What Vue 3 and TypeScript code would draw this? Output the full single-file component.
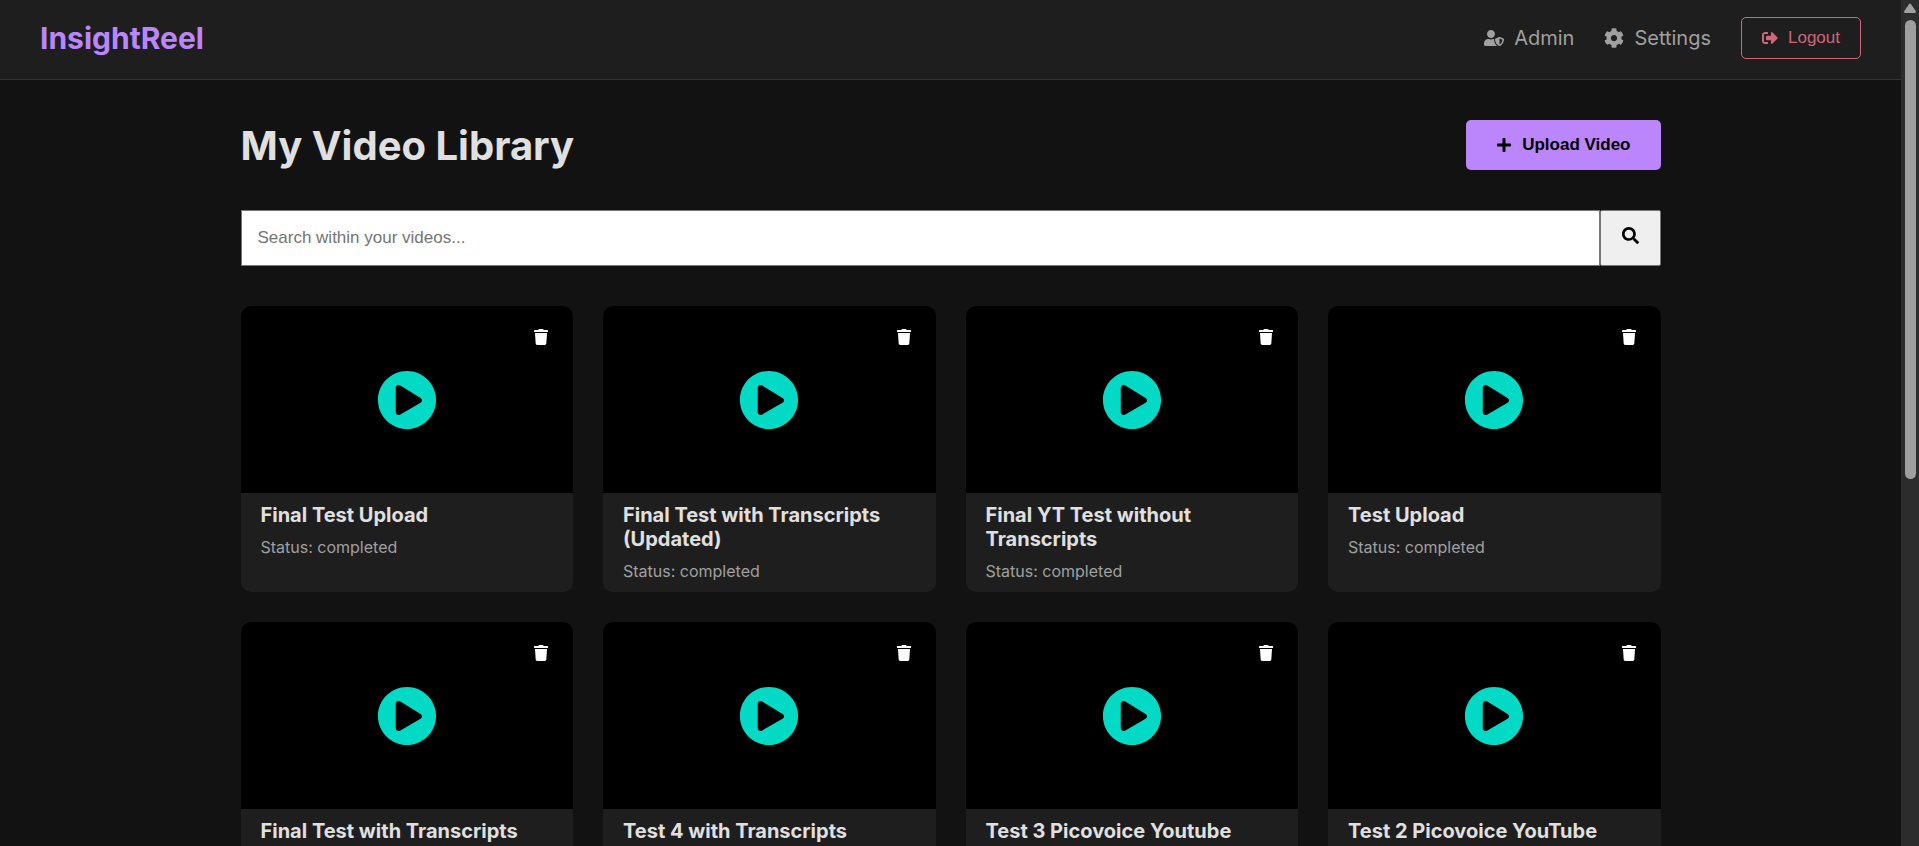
<script setup lang="ts">
import { ref } from 'vue'

interface Video {
  id: number
  title: string
  status: string
}

const query = ref<string>('')

const videos = ref<Video[]>([
  { id: 1, title: 'Final Test Upload', status: 'completed' },
  { id: 2, title: 'Final Test with Transcripts (Updated)', status: 'completed' },
  { id: 3, title: 'Final YT Test without Transcripts', status: 'completed' },
  { id: 4, title: 'Test Upload', status: 'completed' },
  { id: 5, title: 'Final Test with Transcripts', status: 'completed' },
  { id: 6, title: 'Test 4 with Transcripts', status: 'completed' },
  { id: 7, title: 'Test 3 Picovoice Youtube', status: 'completed' },
  { id: 8, title: 'Test 2 Picovoice YouTube', status: 'completed' },
])

function removeVideo(id: number): void {
  videos.value = videos.value.filter((video) => video.id !== id)
}
</script>

<template>
  <div class="shell">
    <div class="page">
      <header class="navbar">
        <a class="brand" href="#">InsightReel</a>
        <nav class="nav">
          <a class="nav-link" href="#admin">
            <svg class="icon" viewBox="0 0 640 512" aria-hidden="true">
              <path d="M622.3 271.1l-115.2-45c-4.1-1.6-12.6-3.7-22.2 0l-115.2 45c-10.7 4.2-17.7 14-17.7 24.9 0 111.6 68.7 188.8 132.9 213.9 9.6 3.7 18 1.6 22.2 0C558.4 489.9 640 420.5 640 296c0-10.9-7-20.7-17.7-24.9zM496 462.4V273.3l95.5 37.3c-5.6 87.1-60.9 135.4-95.5 151.8zM224 256c70.7 0 128-57.3 128-128S294.7 0 224 0 96 57.3 96 128s57.3 128 128 128zm96 40c0-2.5.8-4.8 1.1-7.2-2.5-.1-4.9-.8-7.5-.8h-16.7c-22.2 10.2-46.9 16-72.9 16s-50.6-5.8-72.9-16h-16.7C60.2 288 0 348.2 0 422.4V464c0 26.5 21.5 48 48 48h352c6.8 0 13.3-1.5 19.2-4-54-42.9-99.2-116.7-99.2-212z" />
            </svg>
            <span>Admin</span>
          </a>
          <a class="nav-link" href="#settings">
            <svg class="icon" viewBox="0 0 512 512" aria-hidden="true">
              <path d="M487.4 315.7l-42.6-24.6c4.3-23.2 4.3-47 0-70.2l42.6-24.6c4.9-2.8 7.1-8.6 5.5-14-11.1-35.6-30-67.8-54.7-94.6-3.8-4.1-10-5.1-14.8-2.3L380.8 110c-17.9-15.4-38.5-27.3-60.8-35.1V25.8c0-5.6-3.9-10.5-9.4-11.7-36.7-8.2-74.3-7.8-109.2 0-5.5 1.2-9.4 6.1-9.4 11.7V75c-22.2 7.9-42.8 19.8-60.8 35.1L88.7 85.5c-4.9-2.8-11-1.9-14.8 2.3-24.7 26.7-43.6 58.9-54.7 94.6-1.7 5.4.6 11.2 5.5 14L67.3 221c-4.3 23.2-4.3 47 0 70.2l-42.6 24.6c-4.9 2.8-7.1 8.6-5.5 14 11.1 35.6 30 67.8 54.7 94.6 3.8 4.1 10 5.1 14.8 2.3l42.6-24.6c17.9 15.4 38.5 27.3 60.8 35.1v49.2c0 5.6 3.9 10.5 9.4 11.7 36.7 8.2 74.3 7.8 109.2 0 5.5-1.2 9.4-6.1 9.4-11.7v-49.2c22.2-7.9 42.8-19.8 60.8-35.1l42.6 24.6c4.9 2.8 11 1.9 14.8-2.3 24.7-26.7 43.6-58.9 54.7-94.6 1.5-5.5-.7-11.3-5.6-14.1zM256 336c-44.1 0-80-35.9-80-80s35.9-80 80-80 80 35.9 80 80-35.9 80-80 80z" />
            </svg>
            <span>Settings</span>
          </a>
          <button class="logout" type="button">
            <svg class="icon" viewBox="0 0 512 512" aria-hidden="true">
              <path d="M497 273L329 441c-15 15-41 4.5-41-17v-96H152c-13.3 0-24-10.7-24-24v-96c0-13.3 10.7-24 24-24h136V88c0-21.4 25.9-32 41-17l168 168c9.3 9.4 9.3 24.6 0 34zM192 436v-40c0-6.6-5.4-12-12-12H96c-17.7 0-32-14.3-32-32V160c0-17.7 14.3-32 32-32h84c6.6 0 12-5.4 12-12V76c0-6.6-5.4-12-12-12H96c-53 0-96 43-96 96v192c0 53 43 96 96 96h84c6.6 0 12-5.4 12-12z" />
            </svg>
            <span>Logout</span>
          </button>
        </nav>
      </header>

      <main class="library">
        <div class="library-head">
          <h1>My Video Library</h1>
          <button class="upload" type="button">
            <svg class="icon" viewBox="0 0 448 512" aria-hidden="true">
              <path d="M416 208H272V64c0-17.67-14.33-32-32-32h-32c-17.67 0-32 14.33-32 32v144H32c-17.67 0-32 14.33-32 32v32c0 17.67 14.33 32 32 32h144v144c0 17.67 14.33 32 32 32h32c17.67 0 32-14.33 32-32V304h144c17.67 0 32-14.33 32-32v-32c0-17.67-14.33-32-32-32z" />
            </svg>
            <span>Upload Video</span>
          </button>
        </div>

        <form class="search" role="search" @submit.prevent>
          <input
            v-model="query"
            class="search-input"
            type="text"
            aria-label="Search within your videos"
            placeholder="Search within your videos..."
          />
          <button class="search-button" type="submit" aria-label="Search">
            <svg class="icon" viewBox="0 0 512 512" aria-hidden="true">
              <path d="M505 442.7L405.3 343c-4.5-4.5-10.6-7-17-7H372c27.6-35.3 44-79.7 44-128C416 93.1 322.9 0 208 0S0 93.1 0 208s93.1 208 208 208c48.3 0 92.7-16.4 128-44v16.3c0 6.4 2.5 12.5 7 17l99.7 99.7c9.4 9.4 24.6 9.4 33.9 0l28.3-28.3c9.4-9.4 9.4-24.6.1-34zM208 336c-70.7 0-128-57.2-128-128 0-70.7 57.2-128 128-128 70.7 0 128 57.2 128 128 0 70.7-57.2 128-128 128z" />
            </svg>
          </button>
        </form>

        <section class="grid" aria-label="Videos">
          <article v-for="video in videos" :key="video.id" class="card">
            <div class="thumb">
              <svg class="play" viewBox="0 0 512 512" aria-hidden="true">
                <path d="M256 8C119 8 8 119 8 256s111 248 248 248 248-111 248-248S393 8 256 8zm115.7 272l-176 101c-15.8 8.8-35.7-2.5-35.7-21V152c0-18.4 19.8-29.8 35.7-21l176 107c16.4 9.2 16.4 32.9 0 42z" />
              </svg>
              <button
                class="delete"
                type="button"
                :aria-label="`Delete ${video.title}`"
                @click="removeVideo(video.id)"
              >
                <svg class="icon" viewBox="0 0 448 512" aria-hidden="true">
                  <path d="M432 32H312l-9.4-18.7A24 24 0 0 0 281.1 0H166.8a23.72 23.72 0 0 0-21.4 13.3L136 32H16A16 16 0 0 0 0 48v32a16 16 0 0 0 16 16h416a16 16 0 0 0 16-16V48a16 16 0 0 0-16-16zM53.2 467a48 48 0 0 0 47.9 45h245.8a48 48 0 0 0 47.9-45L416 128H32z" />
                </svg>
              </button>
            </div>
            <div class="info">
              <h2>{{ video.title }}</h2>
              <p>Status: {{ video.status }}</p>
            </div>
          </article>
        </section>
      </main>
    </div>

    <div class="rail" aria-hidden="true">
      <svg class="rail-arrow" viewBox="0 0 12 10">
        <path d="M5 1.2Q6 -.2 7 1.2L11.6 7.8Q12.4 10 10.8 10H1.2Q-.4 10 .4 7.8Z" />
      </svg>
      <div class="rail-thumb"></div>
    </div>
  </div>
</template>

<style>
body {
  background: #121212;
  overflow: hidden;
}
</style>

<style scoped>
.shell {
  display: flex;
  height: 100vh;
  color: #e0e0e0;
  font-family: Inter, "Liberation Sans", sans-serif;
  font-size: 16px;
}

.page {
  flex: 1;
  min-width: 0;
  overflow: hidden;
}

.icon {
  width: 16px;
  height: 16px;
  flex: none;
  fill: currentColor;
}

.navbar {
  display: flex;
  align-items: center;
  justify-content: space-between;
  padding: 17px 40px 20px;
  background: #1e1e1e;
  border-bottom: 1px solid #333;
}

.brand {
  color: #bb86fc;
  font-size: 30px;
  font-weight: 700;
  line-height: 36px;
  text-decoration: none;
}

.nav {
  display: flex;
  align-items: center;
  gap: 30px;
}

.nav-link {
  display: flex;
  align-items: center;
  gap: 10px;
  color: #a0a0a0;
  font-size: 20px;
  line-height: 24px;
  text-decoration: none;
}

.nav-link .icon {
  width: 20px;
  height: 20px;
}

button {
  font-family: "Liberation Sans", Arial, sans-serif;
  font-size: 17px;
  cursor: pointer;
}

.logout {
  display: flex;
  align-items: center;
  gap: 10px;
  padding: 10px 20px;
  border: 1px solid #cf6679;
  border-radius: 5px;
  background: transparent;
  color: #cf6679;
  line-height: 20px;
}

.library {
  max-width: 1420px;
  margin: 0 auto;
  padding: 40px 0;
}

.library-head {
  display: flex;
  align-items: flex-end;
  justify-content: space-between;
  margin-bottom: 40px;
}

h1 {
  margin: 0;
  font-size: 40px;
  font-weight: 700;
  line-height: 48px;
}

.upload {
  display: flex;
  align-items: center;
  gap: 10px;
  padding: 15px 30px;
  border: 0;
  border-radius: 5px;
  background: #bb86fc;
  color: #000;
  font-weight: 700;
  line-height: 20px;
}

.search {
  display: flex;
  margin-bottom: 40px;
}

.search-input {
  flex: 1;
  min-width: 0;
  height: 56px;
  box-sizing: border-box;
  padding: 0 16px;
  border: 1px solid #767676;
  border-radius: 0;
  background: #fff;
  color: #000;
  font-family: "Liberation Sans", Arial, sans-serif;
  font-size: 17px;
}

.search-input::placeholder {
  color: #757575;
}

.search-button {
  display: flex;
  align-items: center;
  padding: 0 21px 6px;
  border: 1px solid #767676;
  border-radius: 2px;
  background: #efefef;
  color: #000;
}

.search-button .icon {
  width: 17px;
  height: 17px;
}

.grid {
  display: grid;
  grid-template-columns: repeat(4, 1fr);
  gap: 30px;
}

.card {
  overflow: hidden;
  border-radius: 10px;
  background: #1e1e1e;
}

.thumb {
  position: relative;
  display: flex;
  align-items: center;
  justify-content: center;
  aspect-ratio: 16 / 9;
  background: #000;
}

.play {
  width: 60px;
  height: 60px;
  fill: #03dac6;
}

.delete {
  position: absolute;
  top: 10px;
  right: 11px;
  display: flex;
  padding: 13px;
  border: 0;
  background: transparent;
  color: #fff;
}

.info {
  padding: 10px 20px 11px;
}

h2 {
  margin: 0 0 10px;
  font-size: 20px;
  font-weight: 700;
  line-height: 24px;
}

.info p {
  margin: 0;
  color: #a0a0a0;
  line-height: 20px;
}

.rail {
  display: flex;
  flex-direction: column;
  align-items: center;
  gap: 7px;
  width: 18px;
  flex: none;
  padding-top: 3px;
  box-sizing: border-box;
  background: #2c2c2c;
}

.rail-arrow {
  width: 12px;
  height: 10px;
  flex: none;
  fill: #9f9f9f;
}

.rail-thumb {
  width: 11px;
  height: 54.4%;
  border-radius: 6px;
  background: #9f9f9f;
}
</style>
